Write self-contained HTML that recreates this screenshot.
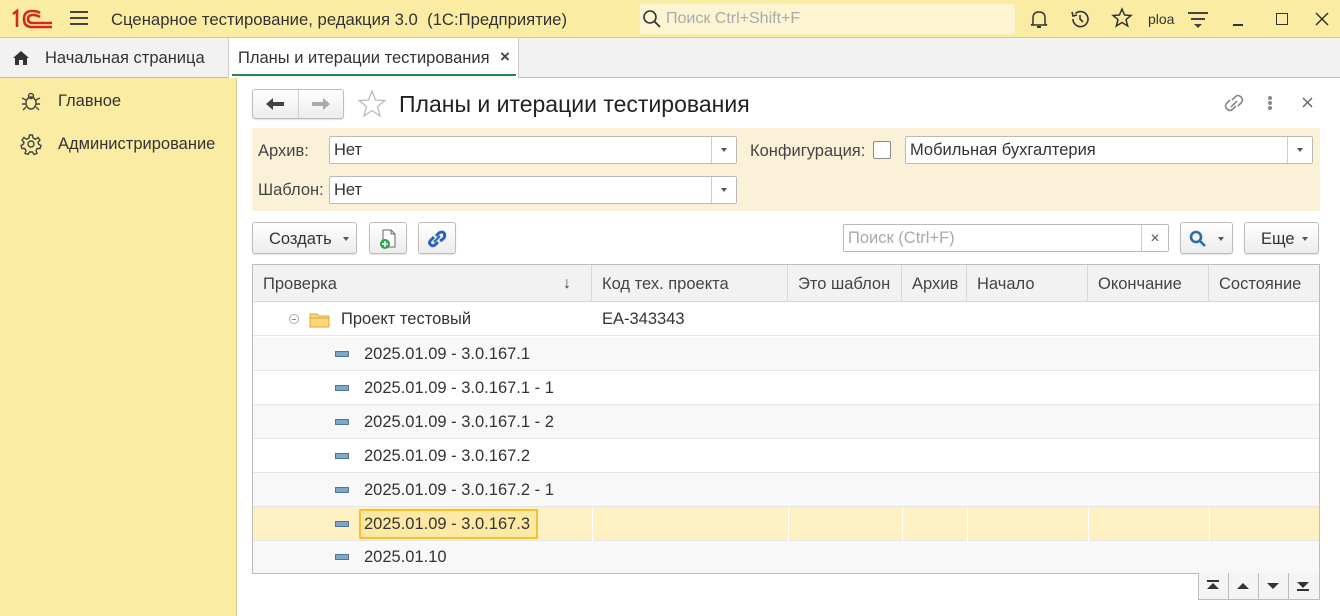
<!DOCTYPE html>
<html><head><meta charset="utf-8"><style>
*{box-sizing:border-box;margin:0;padding:0}
body{width:1340px;height:616px;overflow:hidden;font-family:"Liberation Sans",sans-serif;font-size:16.5px;color:#333;background:#fff;position:relative}
.a{position:absolute}
.top{left:0;top:0;width:1340px;height:38px;background:#fbeca4;border-bottom:1px solid #d8c98a}
.tabs{left:0;top:38px;width:1340px;height:40px;background:#f2f2f2;border-bottom:1px solid #bbb}
.side{left:0;top:78px;width:237px;height:538px;background:#fbeca4;border-right:1px solid #d8c98a}
.inp{background:#fff;border:1px solid #b9b9b9;border-radius:2px;height:28px;line-height:27px;padding-left:4px;color:#333}
.dd{position:absolute;right:0;top:0;width:25px;height:26px;border-left:1px solid #ccc}
.dd:after{content:"";position:absolute;left:9px;top:11px;border:3.5px solid transparent;border-top:4px solid #555}
.btn{background:linear-gradient(#fff,#ececec);border:1px solid #bdbdbd;border-radius:3px;height:32px;box-shadow:0 1px 1px rgba(0,0,0,.12)}
.hd{top:265px;height:37px;line-height:38px;padding-left:10px;color:#444;border-right:1px solid #d8d8d8}
.row{left:253px;width:1066px;height:34px;line-height:35px;border-bottom:1px solid #e6e6e6}
.mk{position:absolute;left:82px;top:14px;width:14px;height:6px;background:#7fa7c9;border:1px solid #4e7698}
.rt{position:absolute;left:111px}
.vl{position:absolute;top:0;height:34px;width:1px;background:#ececec}
</style></head><body>
<div class="a top"></div>
<svg class="a" style="left:10px;top:8px" width="46" height="22" fill="none" stroke="#d42a1c" stroke-width="2.6"><path d="M3 6 L7 3 L7 19"/><path d="M30 5 Q27 3 22 3 Q14 3 14 11 Q14 19 22 19 L42 19"/><path d="M30 9 Q27 7 23 7 Q18 7 18 11 Q18 15 23 15 L42 15"/></svg>
<div class="a" style="left:70px;top:11px;width:18px;height:2px;background:#444;box-shadow:0 6px 0 #444,0 12px 0 #444"></div>
<div class="a" style="left:111px;top:10px;font-size:16.7px;color:#333">Сценарное тестирование, редакция 3.0 &nbsp;(1С:Предприятие)</div>
<div class="a" style="left:640px;top:4px;width:375px;height:30px;background:#fdf5d2;border-radius:2px"></div>
<svg class="a" style="left:642px;top:9px" width="20" height="20"><circle cx="8" cy="8" r="6" fill="none" stroke="#333" stroke-width="1.6"/><line x1="12.5" y1="12.5" x2="18" y2="18" stroke="#333" stroke-width="1.8"/></svg>
<div class="a" style="left:666px;top:10px;color:#aaa;font-size:16px">Поиск Ctrl+Shift+F</div>
<svg class="a" style="left:1028px;top:8px" width="22" height="22" fill="none" stroke="#333" stroke-width="1.5"><path d="M5 16 L5 10 Q5 4 11 4 Q17 4 17 10 L17 16 L19 17 L3 17 Z"/><path d="M9 19 L13 19" stroke-width="2"/></svg>
<svg class="a" style="left:1069px;top:8px" width="22" height="22" fill="none" stroke="#333" stroke-width="1.6"><path d="M4 11 A7.5 7.5 0 1 0 6.5 5.5"/><path d="M3 4 L4 8 L8 7"/><path d="M11 7 L11 11 L14 14"/></svg>
<svg class="a" style="left:1111px;top:7px" width="22" height="22" fill="none" stroke="#333" stroke-width="1.5"><path d="M11 2 L13.6 8 L20 8.5 L15 12.6 L16.7 19 L11 15.5 L5.3 19 L7 12.6 L2 8.5 L8.4 8 Z"/></svg>
<div class="a" style="left:1148px;top:11px;font-size:14px;color:#333">ploa</div>
<div class="a" style="left:1188px;top:12px;width:20px;height:2px;background:#444"></div>
<div class="a" style="left:1191px;top:18px;width:14px;height:2px;background:#444"></div>
<div class="a" style="left:1194px;top:24px;border:4px solid transparent;border-top:4px solid #444"></div>
<div class="a" style="left:1233px;top:24px;width:10px;height:1.5px;background:#333"></div>
<div class="a" style="left:1276px;top:13px;width:12px;height:12px;border:1.5px solid #333"></div>
<svg class="a" style="left:1315px;top:12px" width="14" height="14" stroke="#333" stroke-width="1.5"><line x1="1" y1="1" x2="13" y2="13"/><line x1="13" y1="1" x2="1" y2="13"/></svg>

<div class="a tabs"></div>
<svg class="a" style="left:12px;top:50px" width="18" height="16"><path d="M9 1 L17 8 L15 8 L15 15 L11 15 L11 10 L7 10 L7 15 L3 15 L3 8 L1 8 Z" fill="#333"/></svg>
<div class="a" style="left:45px;top:49px;color:#333">Начальная страница</div>
<div class="a" style="left:228px;top:38px;width:291px;height:40px;background:#fff;border-left:1px solid #ccc;border-right:1px solid #ccc"></div>
<div class="a" style="left:238px;top:49px;color:#333">Планы и итерации тестирования</div>
<div class="a" style="left:500px;top:47px;font-size:17px;font-weight:bold;color:#444">×</div>
<div class="a" style="left:232px;top:74px;width:284px;height:2px;background:#1e8a4c"></div>

<div class="a side"></div>
<svg class="a" style="left:20px;top:90px" width="22" height="22" fill="none" stroke="#444" stroke-width="1.4"><ellipse cx="11" cy="13" rx="5" ry="6"/><circle cx="11" cy="6" r="2.5"/><path d="M6 10 L2 8 M6 14 L2 14 M6 17 L3 20 M16 10 L20 8 M16 14 L20 14 M16 17 L19 20"/></svg>
<div class="a" style="left:58px;top:92px;color:#333">Главное</div>
<svg class="a" style="left:20px;top:133px" width="22" height="22" fill="none" stroke="#444" stroke-width="1.4"><circle cx="11" cy="11" r="3"/><path d="M9.5 2 L12.5 2 L13 5 L15.5 6.3 L18 4.5 L20 7 L18 9.3 L18.5 11 L21 12.5 L20 15.5 L17.3 15.5 L16 17.7 L17 20.3 L14 21.5 L12.5 19 L9.5 19 L8 21.5 L5 20.3 L6 17.7 L4.7 15.5 L2 15.5 L1 12.5 L3.5 11 L4 9.3 L2 7 L4 4.5 L6.5 6.3 L9 5 Z"/></svg>
<div class="a" style="left:58px;top:135px;color:#333">Администрирование</div>

<div class="a btn" style="left:252px;top:89px;width:92px;height:30px"></div>
<div class="a" style="left:298px;top:90px;width:1px;height:28px;background:#d0d0d0"></div>
<svg class="a" style="left:263px;top:96px" width="24" height="16"><path d="M3 8 L10 2 L10 6 L21 6 L21 10 L10 10 L10 14 Z" fill="#444"/></svg>
<svg class="a" style="left:309px;top:96px" width="24" height="16"><path d="M21 8 L14 2 L14 6 L3 6 L3 10 L14 10 L14 14 Z" fill="#aaa"/></svg>
<svg class="a" style="left:357px;top:89px" width="30" height="30" fill="none" stroke="#bbb" stroke-width="1.3"><path d="M15 2 L18.5 11 L28 11.5 L20.5 17.5 L23 27 L15 21.5 L7 27 L9.5 17.5 L2 11.5 L11.5 11 Z"/></svg>
<div class="a" style="left:399px;top:91px;font-size:23px;color:#222">Планы и итерации тестирования</div>
<svg class="a" style="left:1222px;top:92px" width="24" height="22" fill="none" stroke="#888" stroke-width="1.6"><path d="M10 8 L13 5 Q16 2 19 5 Q22 8 19 11 L16 14"/><path d="M14 14 L11 17 Q8 20 5 17 Q2 14 5 11 L8 8"/><path d="M9 15 L15 9"/></svg>
<div class="a" style="left:1268px;top:96px;width:4px;height:4px;background:#888;border-radius:2px;box-shadow:0 5px 0 #888,0 10px 0 #888"></div>
<svg class="a" style="left:1302px;top:97px" width="12" height="12" stroke="#666" stroke-width="1.4"><line x1="1" y1="1" x2="10" y2="10"/><line x1="10" y1="1" x2="1" y2="10"/></svg>

<div class="a" style="left:252px;top:128px;width:1068px;height:83px;background:#fbf1d8"></div>
<div class="a" style="left:258px;top:142px;color:#444">Архив:</div>
<div class="a inp" style="left:329px;top:136px;width:408px">Нет<div class="dd"></div></div>
<div class="a" style="left:258px;top:181px;color:#444">Шаблон:</div>
<div class="a inp" style="left:329px;top:176px;width:408px">Нет<div class="dd"></div></div>
<div class="a" style="left:750px;top:142px;color:#444">Конфигурация:</div>
<div class="a" style="left:873px;top:141px;width:18px;height:18px;background:#fff;border:1px solid #888;border-radius:2px"></div>
<div class="a inp" style="left:905px;top:136px;width:408px">Мобильная бухгалтерия<div class="dd"></div></div>

<div class="a btn" style="left:252px;top:222px;width:105px"></div>
<div class="a" style="left:269px;top:230px;color:#333">Создать</div>
<div class="a" style="left:343px;top:237px;border:3px solid transparent;border-top:4px solid #555"></div>
<div class="a btn" style="left:369px;top:222px;width:38px"></div>
<svg class="a" style="left:376px;top:227px" width="24" height="24"><path d="M7 3 L15 3 L19 7 L19 20 L7 20 Z" fill="#fff" stroke="#666"/><path d="M15 3 L15 7 L19 7" fill="none" stroke="#666"/><circle cx="9" cy="17" r="5" fill="#2ca14a"/><path d="M9 14 L9 20 M6 17 L12 17" stroke="#fff" stroke-width="1.6"/></svg>
<div class="a btn" style="left:418px;top:222px;width:38px"></div>
<svg class="a" style="left:425px;top:228px" width="24" height="22" fill="none" stroke="#2d61b8" stroke-width="3"><path d="M9 9 L6 12 Q3 15 6 17 Q8 19 11 16 L13 14"/><path d="M11 8 L14 5 Q17 3 19 5 Q21 8 18 11 L15 13"/><path d="M9 14 L15 8" stroke-width="2"/></svg>
<div class="a inp" style="left:843px;top:224px;width:326px;border-radius:2px;color:#aaa">Поиск (Ctrl+F)<div style="position:absolute;right:0;top:0;width:27px;height:26px;border-left:1px solid #ccc;text-align:center;color:#555;font-size:16px">×</div></div>
<div class="a btn" style="left:1180px;top:222px;width:53px"></div>
<svg class="a" style="left:1188px;top:229px" width="20" height="20" fill="none" stroke="#2a70a8" stroke-width="2.6"><circle cx="8" cy="8" r="5"/><line x1="12" y1="12" x2="17" y2="17"/></svg>
<div class="a" style="left:1218px;top:237px;border:3px solid transparent;border-top:4px solid #555"></div>
<div class="a btn" style="left:1244px;top:222px;width:75px"></div>
<div class="a" style="left:1261px;top:230px;color:#333">Еще</div>
<div class="a" style="left:1302px;top:237px;border:3px solid transparent;border-top:4px solid #555"></div>

<div class="a" style="left:252px;top:264px;width:1068px;height:310px;border:1px solid #bdbdbd"></div>
<div class="a" style="left:253px;top:265px;width:1066px;height:37px;background:#f2f2f2;border-bottom:1px solid #d8d8d8"></div>
<div class="a hd" style="left:253px;width:339px">Проверка</div>
<div class="a" style="left:563px;top:275px;font-size:16px;color:#444">↓</div>
<div class="a hd" style="left:592px;width:196px">Код тех. проекта</div>
<div class="a hd" style="left:788px;width:114px">Это шаблон</div>
<div class="a hd" style="left:902px;width:65px">Архив</div>
<div class="a hd" style="left:967px;width:121px">Начало</div>
<div class="a hd" style="left:1088px;width:121px">Окончание</div>
<div class="a hd" style="left:1209px;width:110px;border-right:0">Состояние</div>

<div class="a row" style="top:302px;background:#fff"><div style="position:absolute;left:36px;top:12px;width:10px;height:10px;border:1px solid #aaa;border-radius:50%"></div><div style="position:absolute;left:39px;top:16.5px;width:4px;height:1px;background:#888"></div>
<svg style="position:absolute;left:56px;top:9px" width="22" height="18"><path d="M1 3 L8 3 L10 5 L20 5 L20 16 L1 16 Z" fill="#fbd77a" stroke="#d9a93a"/><path d="M1 7 L20 7" stroke="#d9a93a"/></svg>
<span style="position:absolute;left:88px">Проект тестовый</span><span style="position:absolute;left:349px">EA-343343</span></div>
<div class="a row" style="top:337px;background:#f8f8f8"><div class="mk"></div><span class="rt">2025.01.09 - 3.0.167.1</span></div>
<div class="a row" style="top:371px;background:#fff"><div class="mk"></div><span class="rt">2025.01.09 - 3.0.167.1 - 1</span></div>
<div class="a row" style="top:405px;background:#f8f8f8"><div class="mk"></div><span class="rt">2025.01.09 - 3.0.167.1 - 2</span></div>
<div class="a row" style="top:439px;background:#fff"><div class="mk"></div><span class="rt">2025.01.09 - 3.0.167.2</span></div>
<div class="a row" style="top:473px;background:#f8f8f8"><div class="mk"></div><span class="rt">2025.01.09 - 3.0.167.2 - 1</span></div>
<div class="a row" style="top:507px;background:#fdf0c3"><div class="mk"></div>
<div style="position:absolute;left:106px;top:2px;width:179px;height:30px;border:2px solid #f3c232;background:#fde9a3"></div><span class="rt">2025.01.09 - 3.0.167.3</span>
<div class="vl" style="left:339px;background:#fff"></div><div class="vl" style="left:535px;background:#fff"></div><div class="vl" style="left:649px;background:#fff"></div><div class="vl" style="left:714px;background:#fff"></div><div class="vl" style="left:835px;background:#fff"></div><div class="vl" style="left:956px;background:#fff"></div></div>
<div class="a row" style="top:541px;background:#f8f8f8;border-bottom:0;height:32px"><div class="mk" style="top:13px"></div><span class="rt" style="line-height:33px">2025.01.10</span></div>

<div class="a" style="left:1198px;top:573px;width:122px;height:27px;border:1px solid #bdbdbd;border-top:0;background:#f4f4f4"></div>
<div class="a" style="left:1228px;top:573px;width:1px;height:27px;background:#bdbdbd"></div>
<div class="a" style="left:1258px;top:573px;width:1px;height:27px;background:#bdbdbd"></div>
<div class="a" style="left:1288px;top:573px;width:1px;height:27px;background:#bdbdbd"></div>
<svg class="a" style="left:1205px;top:579px" width="16" height="14" fill="#333"><rect x="2" y="1" width="12" height="2"/><path d="M8 4 L14 10 L2 10 Z"/></svg>
<svg class="a" style="left:1235px;top:579px" width="16" height="14" fill="#333"><path d="M8 4 L14 10 L2 10 Z"/></svg>
<svg class="a" style="left:1265px;top:579px" width="16" height="14" fill="#333"><path d="M2 4 L14 4 L8 10 Z"/></svg>
<svg class="a" style="left:1295px;top:579px" width="16" height="14" fill="#333"><path d="M2 3 L14 3 L8 9 Z"/><rect x="2" y="10" width="12" height="2"/></svg>
</body></html>
